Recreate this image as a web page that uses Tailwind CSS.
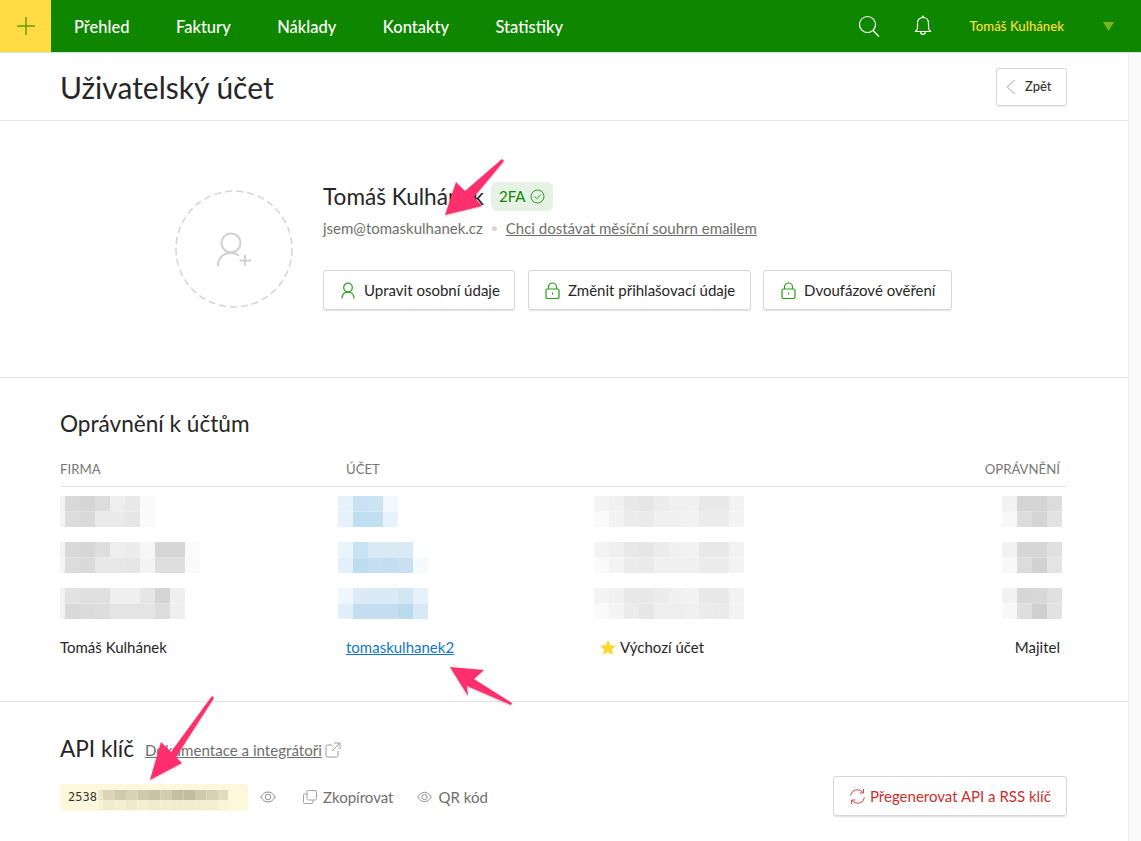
<!DOCTYPE html>
<html lang="cs">
<head>
    <meta charset="UTF-8">
    <title>Uživatelský účet</title>
    <script src="https://cdn.jsdelivr.net/npm/@tailwindcss/browser@4"></script>
</head>
<body class="bg-white text-[#262626] font-['Lato',sans-serif] h-[841px] overflow-hidden relative">
    <!-- Top bar -->
    <header class="h-[53px] bg-[#0f8600] border-b border-[#d5e6d2] flex items-center">
        <div class="w-[51px] h-[52px] bg-[#ffdb43] flex items-center justify-center">
            <svg width="18" height="18" viewBox="0 0 18 18" fill="none" stroke="#5f9e12" stroke-width="1.4"><path d="M9 0v18M0 9h18"/></svg>
        </div>
        <nav class="ml-[23px] mt-[2px] flex items-center gap-[46.5px] text-white text-[16.5px] font-medium">
            <a href="#">Přehled</a>
            <a href="#">Faktury</a>
            <a href="#">Náklady</a>
            <a href="#">Kontakty</a>
            <a href="#">Statistiky</a>
        </nav>
        <div class="ml-auto flex items-center">
            <svg width="22" height="22" viewBox="0 0 22 22" fill="none" stroke="#fff" stroke-width="1.2"><circle cx="9.5" cy="9.5" r="8"/><path d="M15 15.5l6 6"/></svg>
            <svg class="ml-[34px]" width="18" height="22" viewBox="0 0 18 22" fill="none" stroke="#fff" stroke-width="1.2"><path d="M9 2.500c-3.600 0-5.500 2.600-5.500 6v4.500c0 1.600-1 2.700-2.500 3.500h16c-1.500-.8-2.500-1.900-2.500-3.500V8.500c0-3.400-1.900-6-5.500-6z"/><circle cx="9" cy="1.500" r="1" fill="#fff" stroke="none"/><path d="M6.500 16.800a2.500 2.500 0 0 0 5 0"/></svg>
            <span class="ml-[38px] mt-[2px] text-[13.2px] font-medium text-[#ffdf3c]">Tomáš Kulhánek</span>
            <svg class="ml-[39px] mr-[27px]" width="11" height="9" viewBox="0 0 11 9"><path d="M0 0h11L5.500 9z" fill="#7db51b"/></svg>
        </div>
    </header>

    <div class="flex h-[788px]">
        <main class="w-[1128px]">
            <!-- Page title -->
            <div class="h-[68px] border-b border-[#e3e3e3] pl-[60px] pr-[61px] flex items-center justify-between">
                <h1 class="text-[30px] leading-none">Uživatelský účet</h1>
                <a href="#" class="w-[71px] h-[38px] border border-[#d6d6d6] rounded-[3px] shadow-[0_1px_1px_rgba(0,0,0,0.08)] flex items-center text-[13px] font-medium text-[#333] pl-[9px] gap-[9px]">
                    <svg width="10" height="16" viewBox="0 0 10 16" fill="none" stroke="#c4c4c4" stroke-width="1.1"><path d="M9 1L1 8l8 7"/></svg>
                    Zpět
                </a>
            </div>

            <!-- Profile -->
            <section class="h-[257px] border-b border-[#e3e3e3] pl-[175px] pt-[69px] flex">
                <svg width="118" height="118" viewBox="0 0 118 118" fill="none" stroke="#d4d4d4" stroke-width="1.500">
                    <circle cx="59" cy="59" r="58" stroke-dasharray="7 4"/>
                    <g stroke="#d0d0d0" stroke-width="2"><circle cx="56" cy="53" r="9.500"/><path d="M43 76c0-8 5-13 13-13 3.500 0 6 1 8 2.500M70 65v10.500M64.500 70.500H76"/></g>
                </svg>
                <div class="ml-[30px] -mt-[8px]">
                    <div class="flex items-center h-[30px]">
                        <h2 class="text-[22.6px] leading-none">Tomáš Kulhánek</h2>
                        <span class="ml-[7px] -mt-[1px] h-[29px] px-[8px] rounded-[6px] bg-[#e6f3e4] text-[#0f8600] text-[15px] flex items-center gap-[5px]">2FA
                            <svg width="15" height="15" viewBox="0 0 15 15" fill="none" stroke="#2a9a1c" stroke-width="1"><circle cx="7.500" cy="7.500" r="6.500"/><path d="M4.500 7.500l2.200 2.200 4-4"/></svg>
                        </span>
                    </div>
                    <div class="mt-[6px] flex items-center text-[15px] leading-[20px] text-[#6e6e6e]">
                        <span>jsem@tomaskulhanek.cz</span>
                        <span class="mx-[9px] w-[5px] h-[5px] rounded-full bg-[#d5d5d5]"></span>
                        <a href="#" class="underline">Chci dostávat měsíční souhrn emailem</a>
                    </div>
                    <div class="mt-[32px] flex gap-[12px] text-[15px]">
                        <a href="#" class="w-[192px] mr-[1px] h-[40px] border border-[#d6d6d6] rounded-[3px] shadow-[0_1px_1px_rgba(0,0,0,0.12)] flex items-center pl-[17px] gap-[9px]">
                            <svg width="14" height="17" viewBox="0 0 14 17" fill="none" stroke="#2a9a1c" stroke-width="1.200"><circle cx="7" cy="5.500" r="4.300"/><path d="M1 16.500c0-4 2.500-6.700 6-6.700s6 2.700 6 6.700"/></svg>
                            Upravit osobní údaje
                        </a>
                        <a href="#" class="w-[223px] h-[40px] border border-[#d6d6d6] rounded-[3px] shadow-[0_1px_1px_rgba(0,0,0,0.12)] flex items-center pl-[16px] gap-[8px]">
                            <svg width="15" height="17" viewBox="0 0 15 17" fill="none" stroke="#2a9a1c" stroke-width="1.200"><rect x="1" y="7" width="13" height="9.500" rx="1.500"/><path d="M3.500 7V5a4 4 0 0 1 8 0v2M7.500 10.500v2"/></svg>
                            Změnit přihlašovací údaje
                        </a>
                        <a href="#" class="w-[189px] h-[40px] border border-[#d6d6d6] rounded-[3px] shadow-[0_1px_1px_rgba(0,0,0,0.12)] flex items-center pl-[17px] gap-[8px]">
                            <svg width="15" height="17" viewBox="0 0 15 17" fill="none" stroke="#2a9a1c" stroke-width="1.200"><rect x="1" y="7" width="13" height="9.500" rx="1.500"/><path d="M3.500 7V5a4 4 0 0 1 8 0v2M7.500 10.500v2"/></svg>
                            Dvoufázové ověření
                        </a>
                    </div>
                </div>
            </section>

            <!-- Permissions -->
            <section class="h-[324px] border-b border-[#e3e3e3] pl-[60px] pr-[61px] pt-[32px]">
                <h2 class="text-[22.6px] leading-[28px]">Oprávnění k účtům</h2>
                <div class="mt-[22px] h-[27px] border-b border-[#e3e3e3] grid grid-cols-[278px_256px_408px_minmax(0,1fr)] text-[13.2px] text-[#777] leading-[18px]">
                    <span>FIRMA</span>
                    <span class="pl-[8px]">ÚČET</span>
                    <span></span>
                    <span class="min-w-0 flex justify-end pr-[7px] whitespace-nowrap">OPRÁVNĚNÍ</span>
                </div>
                <div class="pt-[9px] grid grid-cols-[278px_256px_408px_1fr] auto-rows-[46px] items-start">
                    <svg class="blur-cells" width="150" height="31" data-first="5" data-cells="f2 d9 d5 dc ee e8 fa|f4 dc d9 ea ea e6 fa"></svg>
                    <svg class="blur-cells" width="150" height="31" data-first="15" data-cells="e6f2fa c9e2f3 cde4f3 f1f7fb|e6f2fa bfdef2 c2dff2 e6f3fb"></svg>
                    <svg class="blur-cells" width="155" height="31" data-first="15" data-cells="f4 f0 e8 e6 ec f0 f0 e8 e8 f2|fa f2 ec ea f0 f0 f2 ec ec f3"></svg>
                    <svg class="blur-cells" width="65" height="31" data-first="15" data-cells="f2 d4 d4 dc|f8 dc d4 e2"></svg>

                    <svg class="blur-cells" width="150" height="31" data-first="5" data-cells="f2 d9 d6 de ef ec f6 d6 d6 fb|f4 dc da e8 e8 e6 f4 de de fa"></svg>
                    <svg class="blur-cells" width="150" height="31" data-first="15" data-cells="e8f3fa c9e2f3 daeaf5 daeaf5 daeaf5 fcfeff|e4f0f9 bedcf0 c6dff1 c4ddf0 c9e0f1 f6fafe"></svg>
                    <svg class="blur-cells" width="155" height="31" data-first="15" data-cells="f4 ef e8 e6 ec f0 f2 e8 e8 f2|fa f3 ec ea f0 f0 f0 ec ec f3"></svg>
                    <svg class="blur-cells" width="65" height="31" data-first="15" data-cells="f2 d6 d6 e0|f8 dc d2 e4"></svg>

                    <svg class="blur-cells" width="150" height="31" data-first="5" data-cells="f2 e2 e0 e0 ef ef e6 d4 ee|f2 d9 db dd e4 e4 e4 dc ef"></svg>
                    <svg class="blur-cells" width="150" height="31" data-first="15" data-cells="f0f6fc daebf6 daebf6 daebf6 d2e6f4 e6f1fa|e2eff9 c4ddf0 c4ddf0 c4ddf0 bcdaee d8e8f5"></svg>
                    <svg class="blur-cells" width="155" height="31" data-first="15" data-cells="f4 f0 e8 e8 ec f0 f2 e8 e8 f2|fa f4 ec e6 ee ee f0 ec ea f3"></svg>
                    <svg class="blur-cells" width="65" height="31" data-first="15" data-cells="f2 d6 d8 e0|f8 de cf e2"></svg>

                    <span class="text-[15px] leading-[30px] -mt-[2px]">Tomáš Kulhánek</span>
                    <a href="#" class="pl-[8px] text-[15px] leading-[30px] -mt-[2px] text-[#1177c4] underline">tomaskulhanek2</a>
                    <span class="pl-[6px] text-[15px] leading-[30px] -mt-[2px] flex items-center gap-[4px]">
                        <svg width="16" height="15" viewBox="0 0 16 15"><path d="M8 0l2.400 5 5.600.7-4.100 3.800 1.100 5.500L8 12.300 3 15l1.100-5.500L0 5.700 5.600 5z" fill="#fdd835"/></svg>
                        Výchozí účet
                    </span>
                    <span class="text-[15px] leading-[30px] -mt-[2px] text-right pr-[7px]">Majitel</span>
                </div>
            </section>

            <!-- API key -->
            <section class="pl-[60px] pr-[61px] pt-[31px]">
                <div class="flex items-center h-[32px]">
                    <h2 class="text-[22.6px] leading-none">API klíč</h2>
                    <a href="#" class="ml-[11px] mt-[2px] text-[15.1px] text-[#6e6e6e] underline">Dokumentace a integrátoři</a>
                    <svg class="ml-[3px] mt-[2px]" width="16" height="16" viewBox="0 0 16 16" fill="none" stroke="#9a9a9a" stroke-width="1"><path d="M7 3H2.500A1.500 1.500 0 0 0 1 4.500v9A1.500 1.500 0 0 0 2.500 15h9a1.500 1.500 0 0 0 1.500-1.500V9M9 1h6v6M15 1L7 9"/></svg>
                </div>
                <div class="mt-[13px] flex items-center">
                    <div class="w-[188px] h-[27px] bg-[#fdf8dc] rounded-[3px] flex items-center pl-[8px] font-['DejaVu_Sans_Mono',monospace] text-[12px] text-[#333] relative">
                        2538
                        <svg class="blur-cells absolute left-[38px] top-[6px]" width="130" height="20" data-first="5" data-cells="ece8ca dad5b8 cfcaae d8d3b6 cfcaae c8c3a6 d2cdb0 c4bfa2 c2bda0 cfcaae d6d1b4 e0dbc0|f6f2d6 efebce f3efd2 eeead0 f3efd2 efebce f3efd2 efebce f1edd0 f3efd2 f3efd2 f8f4d8" data-w="11.500" data-h="10"></svg>
                    </div>
                    <svg class="ml-[12px]" width="16" height="12" viewBox="0 0 16 12" fill="none" stroke="#8a8a8a" stroke-width="1"><path d="M.7 6C3 2.500 5.300 1 8 1s5 1.500 7.300 5C13 9.500 10.700 11 8 11S3 9.500.7 6z"/><circle cx="8" cy="6" r="2.800"/></svg>
                    <svg class="ml-[27px]" width="14" height="14" viewBox="0 0 14 14" fill="none" stroke="#a3a3a3" stroke-width="1"><rect x="4" y=".5" width="9.500" height="9.500" rx="1.500"/><path d="M4 4H1.500A1 1 0 0 0 .5 5v7.500a1 1 0 0 0 1 1H9a1 1 0 0 0 1-1V10"/></svg>
                    <span class="ml-[6px] text-[15px] text-[#6e6e6e]">Zkopírovat</span>
                    <svg class="ml-[24px]" width="15" height="12" viewBox="0 0 16 12" fill="none" stroke="#8a8a8a" stroke-width="1"><path d="M.7 6C3 2.500 5.300 1 8 1s5 1.500 7.300 5C13 9.500 10.700 11 8 11S3 9.500.7 6z"/><circle cx="8" cy="6" r="2.800"/></svg>
                    <span class="ml-[6px] text-[15px] text-[#6e6e6e]">QR kód</span>
                    <a href="#" class="ml-auto -mt-[2px] w-[234px] h-[40px] border border-[#d6d6d6] rounded-[3px] shadow-[0_1px_1px_rgba(0,0,0,0.12)] flex items-center pl-[15px] gap-[4px] text-[15px] text-[#c9302c]">
                        <svg width="17" height="17" viewBox="0 0 17 17" fill="none" stroke="#d24a46" stroke-width="1"><path d="M1.500 7.500A7 7 0 0 1 14 4.500M15.500 9.500A7 7 0 0 1 3 12.500M14.500 1v4h-4M2.500 16v-4h4"/></svg>
                        Přegenerovat API a RSS klíč
                    </a>
                </div>
            </section>
        </main>
        <!-- Scrollbar track -->
        <div class="w-[13px] bg-[#fafafa] border-l border-[#eeeeee]"></div>
    </div>

    <!-- Annotation arrows -->
    <svg class="absolute inset-0 pointer-events-none drop-shadow-[0_1px_1px_rgba(0,0,0,0.2)]" width="1141" height="841" viewBox="0 0 1141 841" fill="#ff2e6c">
        <path d="M445 215L456 182 465 191 502 159 504 161 474 197 482 206z"/>
        <path d="M450 667L484 670 474 679 512 703 511 705 467 686 468 696z"/>
        <path d="M150 780L161 742 171 752 212 696 214 698 176 757 182 763z"/>
    </svg>

    <script>
        // mosaic blocks standing in for the pixelated values
        document.querySelectorAll('.blur-cells').forEach(function (svg) {
            var first = +svg.dataset.first, w = +(svg.dataset.w || 15), h = +(svg.dataset.h || 15.5);
            svg.dataset.cells.split('|').forEach(function (row, r) {
                var x = 0;
                row.split(' ').forEach(function (c, i) {
                    var cw = i === 0 ? first : w;
                    var rect = document.createElementNS('http://www.w3.org/2000/svg', 'rect');
                    rect.setAttribute('x', x);
                    rect.setAttribute('y', r * h);
                    rect.setAttribute('width', cw);
                    rect.setAttribute('height', h);
                    rect.setAttribute('fill', '#' + (c.length === 2 ? c + c + c : c));
                    svg.appendChild(rect);
                    x += cw;
                });
            });
        });
    </script>
</body>
</html>
